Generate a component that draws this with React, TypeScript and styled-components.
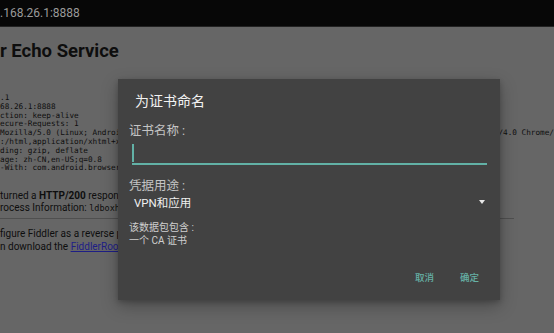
import React from "react";
import styled, { createGlobalStyle } from "styled-components";

const Global = createGlobalStyle`
  html, body { margin: 0; padding: 0; background: #666666; }
  body { width: 554px; height: 333px; overflow: hidden; font-family: Roboto, "Noto Sans CJK SC", sans-serif; }
  #root { width: 554px; height: 333px; position: relative; }
`;

const Screen = styled.div`
  width: 554px;
  height: 333px;
  position: relative;
  overflow: hidden;
  display: flex;
  flex-direction: column;
  background: #666666;
`;

const AddressBar = styled.div`
  height: 27px;
  flex: none;
  background: #070707;
  display: flex;
  align-items: center;
  color: #9a9a9a;
  font-size: 12px;
  white-space: nowrap;
  border-bottom: 1px solid #222;
  box-sizing: border-box;
`;

const Page = styled.div`
  display: flex;
  flex-direction: column;
  color: #0e0e0e;
  white-space: nowrap;
`;

const Title = styled.h1`
  margin: 13px 0 0 0;
  font-size: 18.5px;
  line-height: 22px;
  font-weight: 700;
`;

const HeaderBlock = styled.div`
  margin-top: 32px;
  display: flex;
  flex-direction: column;
  font-family: "DejaVu Sans Mono", monospace;
  font-size: 7.7px;
  line-height: 8.8px;
`;

const MonoLine = styled.div`
  display: flex;
  width: 554px;
`;

const Tail = styled.span`
  margin-left: auto;
`;

const Para = styled.div`
  margin-top: 17px;
  font-size: 10px;
  line-height: 11.5px;
  display: flex;
  flex-direction: column;
`;

const Code = styled.span`
  font-family: "DejaVu Sans Mono", monospace;
  font-size: 8.5px;
`;

const Rule = styled.div`
  width: 514px;
  height: 1px;
  background: #4f4f4f;
  margin-top: 4px;
`;

const Para2 = styled.div`
  margin-top: 9px;
  font-size: 10px;
  line-height: 12.4px;
  display: flex;
  flex-direction: column;
`;

const Link = styled.span`
  color: #1e1e86;
  text-decoration: underline;
`;

const Dialog = styled.div`
  position: absolute;
  left: 118px;
  top: 79px;
  width: 382px;
  height: 221px;
  background: #424242;
  box-shadow: 0 6px 16px rgba(0, 0, 0, 0.28), 0 2px 5px rgba(0, 0, 0, 0.2);
  display: flex;
  flex-direction: column;
  font-family: Roboto, "Noto Sans CJK SC", sans-serif;
`;

const DialogTitle = styled.div`
  margin: 11px 0 0 17px;
  font-size: 14px;
  line-height: 22px;
  color: #f2f2f2;
`;

const Body = styled.div`
  display: flex;
  flex-direction: column;
  padding: 0 13px 0 11px;
`;

const Label = styled.div<{ $top: number }>`
  margin-top: ${(p) => p.$top}px;
  font-size: 12.5px;
  line-height: 18px;
  color: #c4c4c4;
`;

const Field = styled.div`
  margin: 0 0 0 3px;
  height: 23px;
  border-bottom: 2px solid #62b1a6;
  display: flex;
  align-items: flex-end;
`;

const Caret = styled.div`
  width: 2px;
  height: 18px;
  background: #62b1a6;
  margin-bottom: 1px;
`;

const Select = styled.div`
  margin: 0 0 0 5px;
  display: flex;
  align-items: center;
  justify-content: space-between;
  height: 14px;
  font-size: 11.5px;
  color: #f0f0f0;
  padding-right: 2px;
`;

const Arrow = styled.div`
  width: 0;
  height: 0;
  border-left: 3px solid transparent;
  border-right: 3px solid transparent;
  border-top: 4px solid #e8e8e8;
`;

const Info = styled.div`
  margin-top: 12px;
  display: flex;
  flex-direction: column;
  font-size: 10px;
  line-height: 13px;
  color: #cfcfcf;
`;

const Actions = styled.div`
  margin-top: auto;
  margin-bottom: 15px;
  display: flex;
  justify-content: flex-end;
  gap: 26px;
  padding-right: 21px;
`;

const ActionButton = styled.div`
  font-size: 9.5px;
  line-height: 14px;
  color: #66b0a5;
  font-weight: 500;
`;

export default function App() {
  return (
    <>
      <Global />
      <Screen>
        <AddressBar>.168.26.1:8888</AddressBar>
        <Page>
          <Title>r Echo Service</Title>
          <HeaderBlock>
            <MonoLine>.1</MonoLine>
            <MonoLine>68.26.1:8888</MonoLine>
            <MonoLine>ction: keep-alive</MonoLine>
            <MonoLine>ecure-Requests: 1</MonoLine>
            <MonoLine>
              <span> Mozilla/5.0 (Linux; Android 5.1.1)</span>
              <Tail>/4.0 Chrome/</Tail>
            </MonoLine>
            <MonoLine>:/html,application/xhtml+xml</MonoLine>
            <MonoLine>ding: gzip, deflate</MonoLine>
            <MonoLine>age: zh-CN,en-US;q=0.8</MonoLine>
            <MonoLine>-With: com.android.browser</MonoLine>
          </HeaderBlock>
          <Para>
            <div>
              turned a <b>HTTP/200</b> response to your request
            </div>
            <div>
              rocess Information: <Code>ldboxheadless</Code>
            </div>
          </Para>
          <Rule />
          <Para2>
            <div>figure Fiddler as a reverse proxy</div>
            <div>
              n download the <Link>FiddlerRoot certificate</Link>
            </div>
          </Para2>
        </Page>
        <Dialog>
          <DialogTitle>为证书命名</DialogTitle>
          <Body>
            <Label $top={10}>证书名称 :</Label>
            <Field>
              <Caret />
            </Field>
            <Label $top={12}>凭据用途 :</Label>
            <Select>
              <span>VPN和应用</span>
              <Arrow />
            </Select>
            <Info>
              <div>该数据包包含 :</div>
              <div>一个 CA 证书</div>
            </Info>
          </Body>
          <Actions>
            <ActionButton>取消</ActionButton>
            <ActionButton>确定</ActionButton>
          </Actions>
        </Dialog>
      </Screen>
    </>
  );
}
